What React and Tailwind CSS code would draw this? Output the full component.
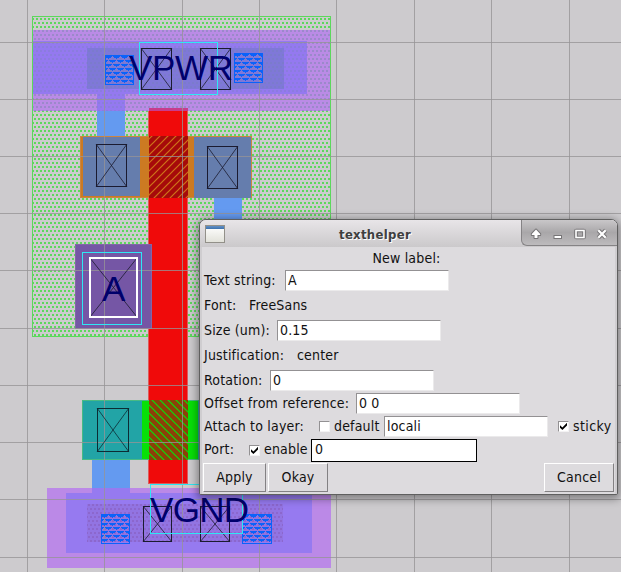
import React from "react";

const GRID_X = [27, 104, 182, 259, 336, 414, 491, 569];
const GRID_Y = [42, 99, 156, 213, 270, 328, 385, 442, 499, 557];

function Via({ x, y, w, h, stroke = "#1b1b30" }) {
  return (
    <g stroke={stroke} fill="none">
      <rect x={x + 0.5} y={y + 0.5} width={w} height={h} shapeRendering="crispEdges" />
      <path d={`M${x} ${y}l${w + 1} ${h + 1}M${x + w + 1} ${y}l${-w - 1} ${h + 1}`} strokeOpacity=".8" />
    </g>
  );
}

function Tap({ x, y, w, h }) {
  return (
    <g transform={`translate(${x} ${y})`} shapeRendering="crispEdges">
      <rect width={w} height={h} fill="url(#tap)" />
      <rect x=".5" y=".5" width={w - 1} height={h - 1} fill="none" stroke="#0a62fa" />
    </g>
  );
}

function Layout() {
  return (
    <svg className="block h-[572px] w-[621px]" viewBox="0 0 621 572">
      <defs>
        <pattern id="well" width="4" height="8" patternUnits="userSpaceOnUse">
          <path d="M0 2h2v2H0zM2 6h2v2H2z" fill="#5cd85c" />
        </pattern>
        <pattern id="wellDim" width="4" height="8" patternUnits="userSpaceOnUse">
          <path d="M0 2h2v2H0zM2 6h2v2H2z" fill="#6c86a0" />
        </pattern>
        <pattern id="metalDots" width="4" height="8" patternUnits="userSpaceOnUse">
          <rect width="2" height="2" fill="#8a62c4" />
          <rect x="2" y="4" width="2" height="2" fill="#8a62c4" />
        </pattern>
        <pattern id="tap" width="8" height="8" patternUnits="userSpaceOnUse">
          <path d="M0 1h7v1H0zM1 2h5v1H1zM3 3h1v1H3zM4 5h4v1H4zM0 5h3v1H0zM5 6h3v1H5zM0 6h2v1H0zM7 7h1v1H7z" fill="#0a62fa" />
        </pattern>
        <pattern id="pgate" width="8" height="8" patternUnits="userSpaceOnUse">
          <path d="M-1 9L9 -1M-1 1L1 -1M7 9L9 7" stroke="#cf7418" strokeWidth="1.2" />
        </pattern>
        <pattern id="ngate" width="8" height="8" patternUnits="userSpaceOnUse">
          <path d="M-1 -1L9 9M-1 7L1 9M7 -1L9 1" stroke="#08e008" strokeWidth="1.2" />
        </pattern>
      </defs>
      <rect width="621" height="572" fill="#cdcbce" />
      <g shapeRendering="crispEdges">
        <rect x="32" y="16" width="299" height="321" fill="url(#well)" />
        <rect x="32.5" y="16.5" width="298" height="320" fill="none" stroke="#5cd85c" />

        <rect x="33" y="30" width="297" height="81" fill="#ba8be6" />
        <rect x="33" y="30" width="297" height="81" fill="url(#wellDim)" opacity=".4" />
        <path d="M33 41H307V94H125V111H97V94H33z" fill="#9479f0" />
        <rect x="87" y="48" width="197" height="41" fill="#7f78d8" />
        <path d="M33 41H307V94H125V111H97V94H33z" fill="url(#wellDim)" opacity=".22" />
        <rect x="97" y="111" width="28" height="26" fill="#649af0" />
        <rect x="214" y="198" width="28" height="30" fill="#649af0" />

        <rect x="149" y="108" width="39" height="376" fill="#f00a0a" />
        <rect x="149" y="108" width="39" height="3" fill="#c83c8c" />
        <path d="M148.5 111V483.5H187.5V111" fill="none" stroke="#de5a5a" />

        <rect x="80" y="136" width="172" height="62" fill="#cc7a22" />
        <rect x="80.5" y="136.5" width="171" height="61" fill="none" stroke="#cc8540" />
        <rect x="83" y="137" width="57" height="59" fill="#657dad" />
        <rect x="194" y="137" width="57" height="61" fill="#657dad" />
        <rect x="149" y="136" width="39" height="62" fill="#a60a0a" />
      </g>
      <rect x="149" y="136" width="39" height="62" fill="url(#pgate)" />

      <g shapeRendering="crispEdges">
        <rect x="75" y="244" width="77" height="85" fill="#7556a5" />
        <rect x="75.5" y="244.5" width="76" height="84" fill="none" stroke="#8166a6" />

        <rect x="82" y="400" width="60" height="60" fill="#22a4a6" />
        <rect x="142" y="400" width="56" height="60" fill="#08e008" />
        <rect x="198" y="400" width="4" height="60" fill="#22a4a6" />
        <rect x="82.5" y="400.5" width="120" height="59" fill="none" stroke="#48ba84" />
        <rect x="149" y="400" width="39" height="60" fill="#8c4008" />
      </g>
      <rect x="149" y="400" width="39" height="60" fill="url(#ngate)" />

      <g shapeRendering="crispEdges">
        <rect x="92" y="460" width="38" height="29" fill="#649af0" />
        <rect x="47" y="488" width="284" height="80" fill="#bb89e7" />
        <path d="M66 493H92V488H130V493H312V553H66z" fill="#967af0" />
        <rect x="87" y="504" width="196" height="38" fill="#9274e2" />
        <rect x="87" y="504" width="196" height="38" fill="url(#metalDots)" opacity=".7" />
      </g>

      <g shapeRendering="crispEdges" fill="#969396" fillOpacity=".78">
        {GRID_X.map((x) => <rect key={x} x={x} y="0" width="1" height="572" />)}
        {GRID_Y.map((y) => <rect key={y} x="0" y={y} width="621" height="1" />)}
      </g>

      <Tap x={105} y={55} w={29} h={30} />
      <Tap x={234} y={53} w={29} h={30} />
      <Tap x={101} y={514} w={29} h={30} />
      <Tap x={242} y={514} w={30} h={30} />
      <Via x={141} y={48} w={30} h={41} />
      <Via x={200} y={48} w={30} h={41} />
      <Via x={96} y={144} w={30} h={42} />
      <Via x={207} y={146} w={30} h={42} />
      <Via x={90} y={258} w={46} h={58} />
      <Via x={97} y={408} w={31} h={43} stroke="#0c2c34" />
      <Via x={143} y={506} w={28} h={35} />
      <Via x={200} y={506} w={29} h={35} />

      <g fill="none" stroke="#2ee8f4" shapeRendering="crispEdges">
        <rect x="139.5" y="42.5" width="78" height="52" />
        <rect x="82.5" y="252.5" width="59" height="72" />
        <rect x="150.5" y="484.5" width="92" height="49" />
      </g>
      <rect x="90" y="258" width="47" height="59" fill="none" stroke="#fff" strokeWidth="2" />

      <g fill="#00006c" fontFamily="'Liberation Sans', Arial, sans-serif" fontSize="35">
        <text x="129" y="80" textLength="104">VPWR</text>
        <text x="102" y="301">A</text>
        <text x="150" y="521.5" textLength="99">VGND</text>
      </g>
    </svg>
  );
}

function Entry({ value, focused }) {
  return focused ? (
    <div className="flex h-[23px] w-[166px] items-center border border-black bg-white pb-px pl-[3px]">{value}</div>
  ) : (
    <div className="flex h-[21px] w-[164px] items-center border border-t-[#939193] border-r-[#ebeaeb] border-b-[#ebeaeb] border-l-[#939193] bg-white pl-[2px]">
      {value}
    </div>
  );
}

function Check({ on }) {
  return (
    <div className="h-[11px] w-[11px] shrink-0 border border-t-[#939193] border-r-[#f3f2f3] border-b-[#f3f2f3] border-l-[#939193] bg-white">
      {on && (
        <svg className="block" width="9" height="9" viewBox="0 0 9 9">
          <path d="M1 3.2L3.4 5.6L8 .8V3.4L3.4 8L1 5.8z" fill="#000" />
        </svg>
      )}
    </div>
  );
}

function Button({ children, className }) {
  return (
    <div className={`flex h-[29px] items-center justify-center border border-t-white border-r-[#838183] border-b-[#838183] border-l-white pb-px ${className}`}>
      {children}
    </div>
  );
}

function TitleButtons() {
  return (
    <div className="h-[26px] w-[96px] rounded-bl-[6px] border-b border-l border-[#858385] bg-linear-to-b from-[#c9c7c9] via-[#a9a7a9] to-[#bdbbbd]">
      <svg className="block" width="95" height="25" viewBox="522 220 95 25">
        <g stroke="#777577" fill="none" strokeLinejoin="round">
          <path d="M536 229.500l-4.200 4.500v1h2.700v3h3v-3h2.700v-1z" strokeWidth="2" />
          <path d="M553.500 237h8.500" strokeWidth="4" />
          <rect x="576" y="230.500" width="8" height="7" strokeWidth="3.600" />
          <path d="M598.300 230.300l7.400 7.400m0-7.400l-7.400 7.400" strokeWidth="4.200" />
        </g>
        <g stroke="#fff" fill="none">
          <path d="M536 229.500l-4.200 4.500v1h2.700v3h3v-3h2.700v-1z" fill="#fff" stroke="none" />
          <path d="M554.500 237h6.500" strokeWidth="2" />
          <rect x="576" y="230.500" width="8" height="7" strokeWidth="1.600" />
          <path d="M598.300 230.300l7.400 7.400m0-7.400l-7.400 7.400" strokeWidth="2.2" />
        </g>
      </svg>
    </div>
  );
}

function Dialog() {
  return (
    <div className="absolute top-[219px] left-[199px] flex h-[276px] w-[419px] flex-col overflow-hidden rounded-t-[7px] rounded-b-[2px] border border-[#5f5f5f] bg-[#dddbde] text-[14px] tracking-[0.18px] text-[#111] shadow-[0_2px_8px_2px_rgba(0,0,0,0.38)] [font-family:'DejaVu_Sans_Condensed','DejaVu_Sans',sans-serif] [font-stretch:75%]">
      <div className="flex h-[27px] w-full shrink-0 justify-between bg-linear-to-b from-[#e8e5e8] to-[#cbc9cb]">
        <div className="flex w-[30px] pt-[5px] pl-[5px]">
          <div className="h-[18px] w-[20px] border border-[#929089] bg-linear-to-b from-white to-[#e2e2da]">
            <div className="h-[3px] bg-linear-to-b from-[#6390c4] to-[#3b71ae]" />
          </div>
        </div>
        <div className="flex flex-1 items-center justify-center pt-[3px] pr-[1px] text-[13px] font-bold tracking-[0.3px] text-[#3f3f3f] [text-shadow:1px_1px_0_#fff]">
          <span>texthelper</span>
        </div>
        <TitleButtons />
      </div>
      <div className="flex h-[247px] flex-col border-x-2 border-[#cfcdd0] whitespace-nowrap">
        <div className="flex h-[21px] shrink-0 items-center justify-center pt-[2px] pr-[4px]">
          <span>New label:</span>
        </div>
        <div className="flex h-[25px] shrink-0 items-center pl-[2px]">
          <span className="w-[81px]">Text string:</span>
          <Entry value="A" />
        </div>
        <div className="flex h-[25px] shrink-0 items-center pl-[2px]">
          <span className="w-[45px]">Font:</span>
          <span>FreeSans</span>
        </div>
        <div className="flex h-[25px] shrink-0 items-center pl-[2px]">
          <span className="w-[73px]">Size (um):</span>
          <Entry value="0.15" />
        </div>
        <div className="flex h-[25px] shrink-0 items-center pl-[2px]">
          <span className="w-[93px]">Justification:</span>
          <span>center</span>
        </div>
        <div className="flex h-[25px] shrink-0 items-center pl-[2px]">
          <span className="w-[66px]">Rotation:</span>
          <Entry value="0" />
        </div>
        <div className="-mt-px flex h-[23px] shrink-0 items-center pl-[2px]">
          <span className="w-[152px] tracking-[0.26px]">Offset from reference:</span>
          <Entry value="0 0" />
        </div>
        <div className="flex h-[23px] shrink-0 items-center pl-[2px]">
          <span className="w-[115px]">Attach to layer:</span>
          <Check />
          <span className="w-[54px] pl-[4px]">default</span>
          <Entry value="locali" />
          <div className="flex items-center pl-[10px]">
            <Check on />
            <span className="pl-[4px] tracking-[0.4px]">sticky</span>
          </div>
        </div>
        <div className="flex h-[24px] shrink-0 items-center pl-[2px]">
          <span className="w-[45px] pb-px">Port:</span>
          <Check on />
          <span className="w-[51px] pb-px pl-[4px]">enable</span>
          <Entry value="0" focused />
        </div>
        <div className="flex h-[31px] shrink-0 items-center gap-[2px] pr-[1px] pl-[1px]">
          <Button className="w-[63px]">Apply</Button>
          <Button className="w-[60px]">Okay</Button>
          <Button className="ml-auto w-[70px]">Cancel</Button>
        </div>
      </div>
    </div>
  );
}

export default function App() {
  return (
    <div className="relative h-[572px] w-[621px] overflow-hidden">
      <Layout />
      <Dialog />
    </div>
  );
}
